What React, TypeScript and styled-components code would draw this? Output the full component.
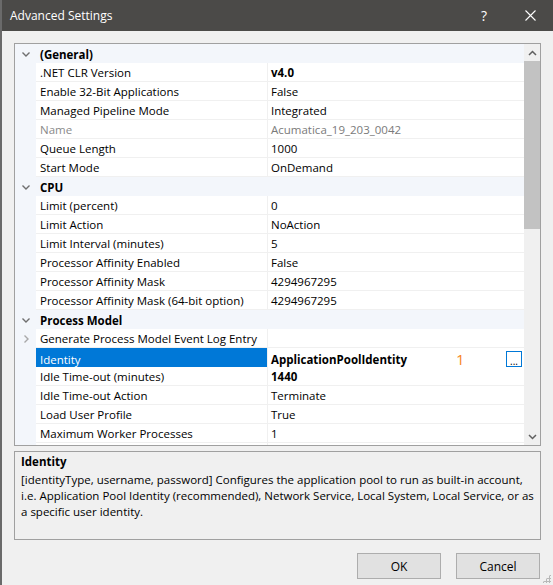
import React, { FC } from 'react';
import styled, { createGlobalStyle } from 'styled-components';

const GlobalStyle = createGlobalStyle`
  html, body {
    margin: 0;
    padding: 0;
    background: #f0f0f0;
  }
  body {
    font-family: 'Open Sans', 'Noto Sans', 'Liberation Sans', sans-serif;
    font-size: 11.5px;
    color: #000;
  }
`;

const Window = styled.div`
  width: 553px;
  height: 585px;
  display: flex;
  flex-direction: column;
  background: #f0f0f0;
  border-left: 2px solid #6a6a6a;
  box-sizing: border-box;
  position: relative;
`;

const TitleBar = styled.div`
  height: 31px;
  flex: none;
  display: flex;
  align-items: center;
  background: #4b4a48;
  color: #fff;
  padding-left: 8px;
  font-size: 12px;
`;

const Title = styled.span`
  flex: 1;
`;

const TitleButton = styled.span<{ $w: number }>`
  width: ${(p) => p.$w}px;
  display: flex;
  justify-content: center;
  align-items: center;
  font-size: 14px;
  color: #fff;
`;

const Body = styled.div`
  flex: 1;
  display: flex;
  flex-direction: column;
  padding: 12px 12px 0 12px;
`;

const GridBox = styled.div`
  height: 403px;
  box-sizing: border-box;
  border: 1px solid #a0a0a0;
  background: #fff;
  display: flex;
  overflow: hidden;
`;

const Rows = styled.div`
  flex: 1;
  display: flex;
  flex-direction: column;
  overflow: hidden;
`;

const Row = styled.div<{ $cat?: boolean }>`
  height: 19px;
  flex: none;
  display: grid;
  grid-template-columns: 21px 232px 1fr;
  background: ${(p) => (p.$cat ? '#f3f6fb' : '#fff')};
`;

const Gutter = styled.div`
  background: #f3f6fb;
  display: flex;
  align-items: center;
  justify-content: center;
`;

const NameCell = styled.div<{ $cat?: boolean; $sel?: boolean; $dim?: boolean }>`
  display: flex;
  align-items: center;
  padding-left: 4px;
  padding-top: 1px;
  white-space: nowrap;
  overflow: hidden;
  font-weight: ${(p) => (p.$cat ? 700 : 400)};
  color: ${(p) => (p.$sel ? '#fff' : p.$dim ? '#8a8a8a' : '#000')};
  background: ${(p) => (p.$sel ? '#0078d7' : 'transparent')};
  border-bottom: ${(p) => (p.$cat ? 'none' : '1px solid #f0f0f0')};
  border-right: ${(p) => (p.$cat ? 'none' : '1px solid #f0f0f0')};
  box-sizing: border-box;
`;

const ValueCell = styled.div<{ $bold?: boolean; $dim?: boolean; $cat?: boolean }>`
  display: flex;
  align-items: center;
  padding-left: 3px;
  padding-right: 1px;
  padding-top: 1px;
  white-space: nowrap;
  font-weight: ${(p) => (p.$bold ? 700 : 400)};
  color: ${(p) => (p.$dim ? '#7a7a7a' : '#000')};
  border-bottom: ${(p) => (p.$cat ? 'none' : '1px solid #f0f0f0')};
  box-sizing: border-box;
`;

const ValueText = styled.span`
  flex: 1;
`;

const Marker = styled.span`
  color: #f7861c;
  font-size: 15px;
  font-weight: 400;
  width: 50px;
`;

const DotsButton = styled.span`
  width: 14px;
  height: 14px;
  border: 1px solid #0078d7;
  display: flex;
  align-items: flex-end;
  justify-content: center;
  font-size: 10px;
  line-height: 10px;
  font-weight: 400;
  margin-right: 1px;
`;

const Scrollbar = styled.div`
  width: 16px;
  flex: none;
  background: #f0f0f0;
  display: flex;
  flex-direction: column;
  align-items: center;
`;

const ScrollArrow = styled.div`
  height: 17px;
  width: 16px;
  display: flex;
  align-items: center;
  justify-content: center;
`;

const Thumb = styled.div`
  width: 16px;
  height: 168px;
  background: #c2c2c2;
`;

const ScrollTrack = styled.div`
  flex: 1;
`;

const Description = styled.div`
  margin-top: 5px;
  height: 89px;
  box-sizing: border-box;
  border: 1px solid #a0a0a0;
  padding: 2px 6px;
  line-height: 16px;
`;

const DescTitle = styled.div`
  font-weight: 700;
  margin-bottom: 2px;
`;

const ButtonRow = styled.div`
  display: flex;
  justify-content: flex-end;
  gap: 15px;
  margin-top: 13px;
  padding-right: 1px;
`;

const DialogButton = styled.button`
  width: 84px;
  height: 26px;
  background: #e1e1e1;
  border: 1px solid #adadad;
  font-family: inherit;
  font-size: 12px;
  color: #000;
  padding: 0;
`;

const Grip = styled.div`
  position: absolute;
  right: 2px;
  bottom: 2px;
  width: 9px;
  height: 9px;
  background-image: radial-gradient(circle, #b8b8b8 1px, transparent 1.2px);
  background-size: 3px 3px;
  clip-path: polygon(100% 0, 100% 100%, 0 100%);
`;

const Chevron: FC<{ open?: boolean }> = ({ open }) => (
  <svg width="10" height="10" viewBox="0 0 10 10">
    {open ? (
      <path d="M1.5 3.5 L5 7 L8.5 3.5" fill="none" stroke="#6f6f6f" strokeWidth="1.4" />
    ) : (
      <path d="M3.5 1.5 L7 5 L3.5 8.5" fill="none" stroke="#a8a8a8" strokeWidth="1.4" />
    )}
  </svg>
);

const Arrow: FC<{ up?: boolean }> = ({ up }) => (
  <svg width="9" height="6" viewBox="0 0 9 6">
    <path
      d={up ? 'M1 5 L4.5 1.5 L8 5' : 'M1 1 L4.5 4.5 L8 1'}
      fill="none"
      stroke="#606060"
      strokeWidth="1.5"
    />
  </svg>
);

type Item = {
  name: string;
  value?: string;
  cat?: boolean;
  bold?: boolean;
  dim?: boolean;
  sel?: boolean;
  collapsed?: boolean;
};

const items: Item[] = [
  { name: '(General)', cat: true },
  { name: '.NET CLR Version', value: 'v4.0', bold: true },
  { name: 'Enable 32-Bit Applications', value: 'False' },
  { name: 'Managed Pipeline Mode', value: 'Integrated' },
  { name: 'Name', value: 'Acumatica_19_203_0042', dim: true },
  { name: 'Queue Length', value: '1000' },
  { name: 'Start Mode', value: 'OnDemand' },
  { name: 'CPU', cat: true },
  { name: 'Limit (percent)', value: '0' },
  { name: 'Limit Action', value: 'NoAction' },
  { name: 'Limit Interval (minutes)', value: '5' },
  { name: 'Processor Affinity Enabled', value: 'False' },
  { name: 'Processor Affinity Mask', value: '4294967295' },
  { name: 'Processor Affinity Mask (64-bit option)', value: '4294967295' },
  { name: 'Process Model', cat: true },
  { name: 'Generate Process Model Event Log Entry', value: '', collapsed: true },
  { name: 'Identity', value: 'ApplicationPoolIdentity', bold: true, sel: true },
  { name: 'Idle Time-out (minutes)', value: '1440', bold: true },
  { name: 'Idle Time-out Action', value: 'Terminate' },
  { name: 'Load User Profile', value: 'True' },
  { name: 'Maximum Worker Processes', value: '1' },
  { name: '', value: '' },
];

const App: FC = () => {
  return (
    <>
      <GlobalStyle />
      <Window>
        <TitleBar>
          <Title>Advanced Settings</Title>
          <TitleButton $w={46}>?</TitleButton>
          <TitleButton $w={46}>
            <svg width="11" height="11" viewBox="0 0 11 11">
              <path d="M0.5 0.5 L10.5 10.5 M10.5 0.5 L0.5 10.5" stroke="#fff" strokeWidth="1.1" />
            </svg>
          </TitleButton>
        </TitleBar>
        <Body>
          <GridBox>
            <Rows>
              {items.map((it, i) =>
                it.cat ? (
                  <Row key={i} $cat>
                    <Gutter>
                      <Chevron open />
                    </Gutter>
                    <NameCell $cat>{it.name}</NameCell>
                    <ValueCell $cat />
                  </Row>
                ) : (
                  <Row key={i}>
                    <Gutter>{it.collapsed && <Chevron />}</Gutter>
                    <NameCell $sel={it.sel} $dim={it.dim}>
                      {it.name}
                    </NameCell>
                    <ValueCell $bold={it.bold} $dim={it.dim}>
                      <ValueText>{it.value}</ValueText>
                      {it.sel && (
                        <>
                          <Marker>1</Marker>
                          <DotsButton>...</DotsButton>
                        </>
                      )}
                    </ValueCell>
                  </Row>
                ),
              )}
            </Rows>
            <Scrollbar>
              <ScrollArrow>
                <Arrow up />
              </ScrollArrow>
              <Thumb />
              <ScrollTrack />
              <ScrollArrow>
                <Arrow />
              </ScrollArrow>
            </Scrollbar>
          </GridBox>
          <Description>
            <DescTitle>Identity</DescTitle>
            <div>
              [identityType, username, password] Configures the application pool to run as built-in
              account, i.e. Application Pool Identity (recommended), Network Service, Local System,
              Local Service, or as a specific user identity.
            </div>
          </Description>
          <ButtonRow>
            <DialogButton>OK</DialogButton>
            <DialogButton>Cancel</DialogButton>
          </ButtonRow>
        </Body>
        <Grip />
      </Window>
    </>
  );
};

export default App;
